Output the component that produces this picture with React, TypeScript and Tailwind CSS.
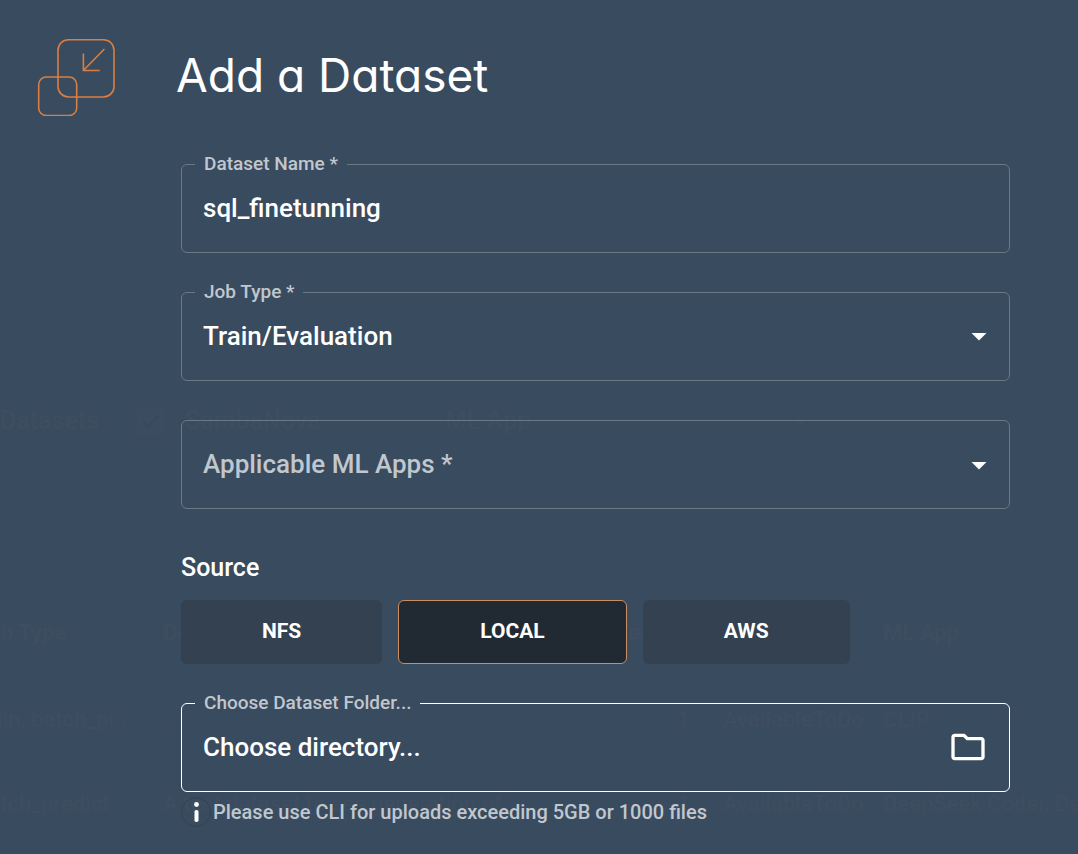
import type { ReactNode } from "react";
import { MdArrowDropDown, MdCheck, MdOutlineFolder } from "react-icons/md";

const rows = [
  { jobs: "train, batch_pr...", description: "-", version: "1", status: "AvailableToDo", apps: "CLIP" },
  {
    jobs: "batch_predict",
    description: "A test dataset to see generation of",
    version: "1",
    status: "AvailableToDo",
    apps: "DeepSeek Coder, DeepSeek",
  },
];

function Backdrop() {
  return (
    <div
      aria-hidden="true"
      className="pointer-events-none absolute inset-0 -z-10 overflow-hidden text-[#3e4d60]"
    >
      <div className="mt-[407px] flex h-7 items-center text-[25px] font-medium">
        <span className="w-[137px]">Datasets</span>
        <span className="mr-5 flex size-7 items-center justify-center bg-[#3b4c60] text-[#38495c]">
          <MdCheck className="size-6" />
        </span>
        <span className="w-[260px]">SambaNova</span>
        <span className="w-[340px]">ML App</span>
        <MdArrowDropDown className="size-8" />
      </div>
      <table className="-ml-6 mt-[152px] w-[1300px] table-fixed text-left text-[22px] font-medium whitespace-nowrap">
        <thead>
          <tr className="h-[90px] font-bold">
            <th className="w-[187px]">Job Type</th>
            <th className="w-[420px]">Description</th>
            <th className="w-[140px] pl-[31px]">Ver</th>
            <th className="w-[160px]" />
            <th>ML App</th>
          </tr>
        </thead>
        <tbody>
          {rows.map((r) => (
            <tr key={r.jobs} className="h-[84px]">
              <td>{r.jobs}</td>
              <td>{r.description}</td>
              <td className="pl-[94px]">{r.version}</td>
              <td>{r.status}</td>
              <td>{r.apps}</td>
            </tr>
          ))}
        </tbody>
      </table>
    </div>
  );
}

function Logo() {
  return (
    <svg viewBox="0 0 80 80" className="size-20 shrink-0" fill="none" stroke="#d97f43" strokeWidth="1.6" aria-hidden="true">
      <rect x="22" y="3.7" width="56" height="57.3" rx="10.5" />
      <rect x="2.7" y="41" width="38" height="38.5" rx="7.5" />
      <path d="M68.4 13 47.6 34.2M47.4 17.5v17h16.3" />
    </svg>
  );
}

function Outlined({ id, label, active, children }: { id: string; label: string; active?: boolean; children: ReactNode }) {
  return (
    <fieldset
      className={
        active
          ? "min-w-0 rounded-md border border-white pl-[13px] pr-[21px]"
          : "min-w-0 rounded-md border border-[#6b7885] pl-[13px] pr-3"
      }
    >
      <legend className="px-[9px] text-[19px] font-medium leading-6 text-[#c1c7ce]">
        <label htmlFor={id}>{label}</label>
      </legend>
      <div className="flex h-[76px] items-center pb-3">{children}</div>
    </fieldset>
  );
}

function Arrow() {
  return <MdArrowDropDown className="pointer-events-none -ml-9 size-9 shrink-0" aria-hidden="true" />;
}

const control = "h-14 min-w-0 flex-1 appearance-none bg-transparent px-2 text-[26px] font-medium outline-none";

export default function App() {
  return (
    <main className="relative isolate min-h-screen overflow-hidden bg-[#394b5f] pb-6 font-['Roboto',sans-serif] text-white">
      <Backdrop />
      <header className="flex items-start pl-9 pt-9">
        <Logo />
        <h1 className="ml-[60px] font-['Inter',sans-serif] text-[46px] font-normal leading-[78px] [font-feature-settings:'cv11']">
          Add a Dataset
        </h1>
      </header>

      <form className="ml-[181px] mr-[68px] mt-9" onSubmit={(e) => e.preventDefault()}>
        <div className="flex flex-col gap-[27px]">
          <Outlined id="name" label="Dataset Name *">
            <input id="name" type="text" defaultValue="sql_finetunning" className={control} />
          </Outlined>
          <Outlined id="job" label="Job Type *">
            <select id="job" className={control} defaultValue="train">
              <option value="train">Train/Evaluation</option>
            </select>
            <Arrow />
          </Outlined>
          <div className="mt-3 flex h-[89px] items-center rounded-md border border-[#6b7885] pl-[13px] pr-3">
            <select aria-label="Applicable ML Apps *" className={control + " text-[#c1c7ce]"} defaultValue="">
              <option value="">Applicable ML Apps *</option>
            </select>
            <Arrow />
          </div>
        </div>

        <h2 className="mt-[43px] text-[25px] font-medium leading-8">Source</h2>
        <div className="mt-4 flex flex-wrap gap-4 text-[21px] font-bold">
          <button type="button" className="h-16 rounded-md bg-[#344150] px-[81px]">NFS</button>
          <button type="button" aria-pressed="true" className="h-16 rounded-md border border-[#cc8d60] bg-[#212a33] px-[81px]">
            LOCAL
          </button>
          <button type="button" className="h-16 rounded-md bg-[#344150] px-[81px]">AWS</button>
        </div>

        <div className="mt-[27px]">
          <Outlined id="folder" label="Choose Dataset Folder..." active>
            <input id="folder" type="text" readOnly value="Choose directory..." className={control} />
            <button type="button" aria-label="Browse for a folder" className="shrink-0">
              <MdOutlineFolder className="size-10" aria-hidden="true" />
            </button>
          </Outlined>
        </div>
        <p className="mt-[5px] flex items-center gap-[2px] text-xl font-medium leading-[30px] text-[#c1c7ce]">
          <svg viewBox="0 0 30 30" className="size-[30px] shrink-0" aria-hidden="true">
            <circle cx="15" cy="15" r="14.5" fill="none" stroke="#35424f" />
            <circle cx="15.5" cy="7.5" r="2.4" fill="white" />
            <rect x="13.5" y="13" width="4" height="12" rx="1.8" fill="white" />
          </svg>
          Please use CLI for uploads exceeding 5GB or 1000 files
        </p>
      </form>
    </main>
  );
}
